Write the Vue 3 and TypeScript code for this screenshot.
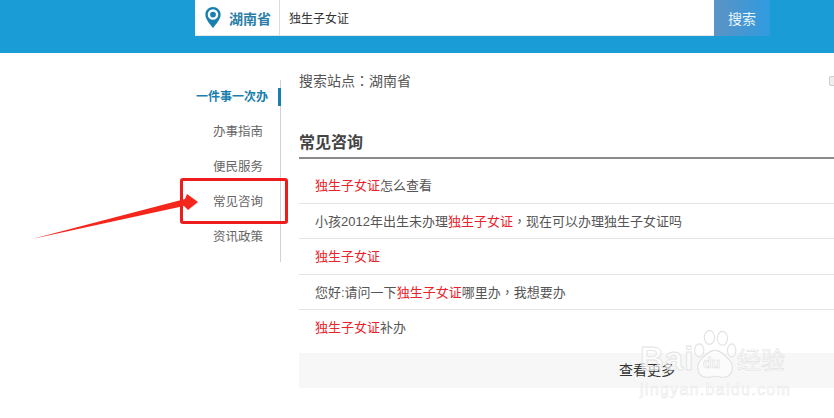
<script setup lang="ts">
const nav = [
  { label: '一件事一次办', active: true },
  { label: '办事指南', active: false },
  { label: '便民服务', active: false },
  { label: '常见咨询', active: false },
  { label: '资讯政策', active: false },
]
const kw = '独生子女证'
const rows = [
  { pre: '', post: '怎么查看' },
  { pre: '小孩2012年出生未办理', post: '，现在可以办理独生子女证吗' },
  { pre: '', post: '' },
  { pre: '您好:请问一下', post: '哪里办，我想要办' },
  { pre: '', post: '补办' },
]
</script>

<template>
  <div class="page">
    <header class="top">
      <div class="search">
        <div class="site">
          <svg class="pin" width="16" height="21" viewBox="0 0 16 22">
            <path fill-rule="evenodd" fill="#1a7fae" d="M8 0C3.600 0 0 3.500 0 7.900 0 12.500 4.600 18 8 22c3.400-4 8-9.500 8-14.100C16 3.500 12.400 0 8 0zm0 2.400a5.500 5.500 0 1 1 0 11 5.500 5.500 0 0 1 0-11z"/>
            <circle cx="8" cy="7.900" r="3" fill="#1a7fae"/>
          </svg>
          <span class="site-name">湖南省</span>
        </div>
        <div class="query">独生子女证</div>
        <div class="btn">搜索</div>
      </div>
    </header>

    <div class="body">
      <aside class="side">
        <div class="side-list">
          <div v-for="n in nav" :key="n.label" class="side-item" :class="{ on: n.active }">{{ n.label }}</div>
        </div>
      </aside>
      <main class="main">
        <div class="station">
          <span>搜索站点：湖南省</span>
          <i class="chip"></i>
        </div>
        <h2 class="title">常见咨询</h2>
        <ul class="list">
          <li v-for="(r, i) in rows" :key="i">{{ r.pre }}<em>{{ kw }}</em>{{ r.post }}</li>
        </ul>
        <div class="more">查看更多</div>
      </main>
    </div>

    <div class="mark-box"></div>
    <svg class="arrow" width="170" height="50" viewBox="0 0 170 50">
      <path fill="#f5261c" d="M1 47 L154 7 L156 2 L167 10 L157 18 L153 14 Z"/>
    </svg>

    <div class="wm">
      <div class="wm-top">
        <span class="wm-bai">Bai</span>
        <svg class="paw" width="44" height="50" viewBox="0 0 46 54">
          <g fill="#fff" fill-opacity="0.500" stroke="#e2e2e2" stroke-width="1.200">
            <ellipse cx="6" cy="22" rx="5" ry="7"/>
            <ellipse cx="17" cy="8" rx="5.500" ry="7.500"/>
            <ellipse cx="31" cy="9" rx="5.500" ry="7.500"/>
            <ellipse cx="41" cy="22" rx="4.500" ry="7"/>
            <path d="M23 22c7 0 11 6 16 11 5 6 3 18-7 18-4 0-6-1-9-1s-5 1-9 1c-10 0-12-12-7-18 5-5 9-11 16-11z"/>
          </g>
        </svg>
        <span class="wm-du">du</span>
        <span class="wm-cn">经验</span>
      </div>
      <div class="wm-url">jingyan.baidu.com</div>
    </div>
  </div>
</template>

<style>
html, body { margin: 0; padding: 0; background: #fff; overflow: hidden; }
</style>

<style scoped>
.page {
  position: relative;
  width: 834px;
  height: 418px;
  overflow: hidden;
  background: #fff;
  font-family: "Liberation Sans", "Noto Sans CJK SC", sans-serif;
  color: #444;
}
.top {
  height: 53px;
  background: #1a9cd6;
  padding-left: 195px;
  box-sizing: border-box;
}
.search {
  display: flex;
  width: 575px;
  height: 36px;
}
.site {
  width: 85px;
  background: #fff;
  border-right: 1px solid #dcdcdc;
  border-bottom: 1px solid #e6e6e6;
  display: flex;
  align-items: center;
  padding-left: 10px;
  box-sizing: border-box;
  gap: 8px;
}
.pin { flex: none; }
.site-name {
  color: #2a7ea8;
  font-size: 14px;
  font-weight: 700;
  white-space: nowrap;
}
.query {
  width: 434px;
  background: #fff;
  border-bottom: 1px solid #e6e6e6;
  box-sizing: border-box;
  font-size: 12px;
  color: #333;
  line-height: 38px;
  padding-left: 9px;
}
.btn {
  width: 56px;
  background: linear-gradient(90deg, #5c93c4, #2f9be0);
  color: #eaf4fb;
  font-size: 14px;
  line-height: 38px;
  text-align: center;
}
.body { display: flex; align-items: flex-start; }
.side {
  width: 281px;
  flex: none;
  padding-top: 27px;
}
.side-list {
  border-right: 1px solid #d2d2d2;
  height: 182px;
  box-sizing: border-box;
}
.side-item {
  height: 35px;
  line-height: 35px;
  font-size: 12.500px;
  text-align: right;
  padding-right: 17px;
  color: #666;
  position: relative;
}
.side-item.on {
  color: #1a7fae;
  font-size: 12px;
  font-weight: 700;
  padding-right: 12px;
}
.side-item.on::after {
  content: "";
  position: absolute;
  right: -1px;
  top: 8px;
  width: 3px;
  height: 18px;
  background: #1a7fae;
}
.main {
  margin-left: 18px;
  width: 696px;
  flex: none;
}
.station {
  display: flex;
  justify-content: space-between;
  align-items: center;
  font-family: "Liberation Sans", "Noto Sans CJK TC", sans-serif;
  font-size: 14px;
  line-height: 20px;
  color: #555;
  height: 20px;
  margin-top: 18px;
  position: relative;
}
.chip {
  position: absolute;
  left: 530px;
  top: 5px;
  width: 10px;
  height: 10px;
  border: 1px solid #ccc;
  border-radius: 2px;
  background: #eee;
  box-sizing: border-box;
}
.title {
  margin: 33px 0 0;
  height: 35px;
  line-height: 38px;
  font-size: 16px;
  font-weight: 700;
  color: #444;
  border-bottom: 2px solid #8a8a8a;
  box-sizing: border-box;
}
.list {
  list-style: none;
  margin: 9px 0 0;
  padding: 0;
  font-family: "Liberation Sans", "Noto Sans CJK TC", sans-serif;
}
.list li {
  height: 35.600px;
  line-height: 35px;
  border-bottom: 1px solid #e4e4e4;
  box-sizing: border-box;
  font-size: 13px;
  padding-left: 16px;
  color: #555;
}
.list li:last-child { border-bottom: 0; }
.list em { font-style: normal; color: #e8222a; }
.more {
  margin-top: 7px;
  height: 35px;
  line-height: 35px;
  background: #f7f7f7;
  text-align: center;
  font-size: 14px;
  color: #333;
}
.mark-box {
  position: absolute;
  left: 180px;
  top: 178px;
  width: 108px;
  height: 46px;
  border: 3px solid #ee1c1c;
  border-radius: 3px;
  box-sizing: border-box;
}
.arrow { position: absolute; left: 31px; top: 192px; }
.wm {
  position: absolute;
  left: 640px;
  top: 332px;
  width: 165px;
  color: rgba(255, 255, 255, 0.600);
  -webkit-text-stroke: 0.800px #e2e2e2;
}
.wm-top { height: 46px; position: relative; }
.wm-bai { font-size: 33px; font-weight: 700; line-height: 34px; position: absolute; left: 0; bottom: 2px; letter-spacing: 1px; }
.paw { position: absolute; left: 53px; top: -2px; }
.wm-du { font-size: 14px; font-weight: 700; position: absolute; left: 63px; bottom: 5px; line-height: 20px; -webkit-text-stroke: 0.500px #d8d8d8; }
.wm-cn { font-size: 24px; position: absolute; left: 97px; bottom: 2px; line-height: 30px; -webkit-text-stroke: 0.600px #e2e2e2; }
.wm-url { font-size: 16px; line-height: 18px; letter-spacing: 1.300px; white-space: nowrap; margin-top: 3px; color: #fff; -webkit-text-stroke: 0.500px #e6e6e6; }
</style>
